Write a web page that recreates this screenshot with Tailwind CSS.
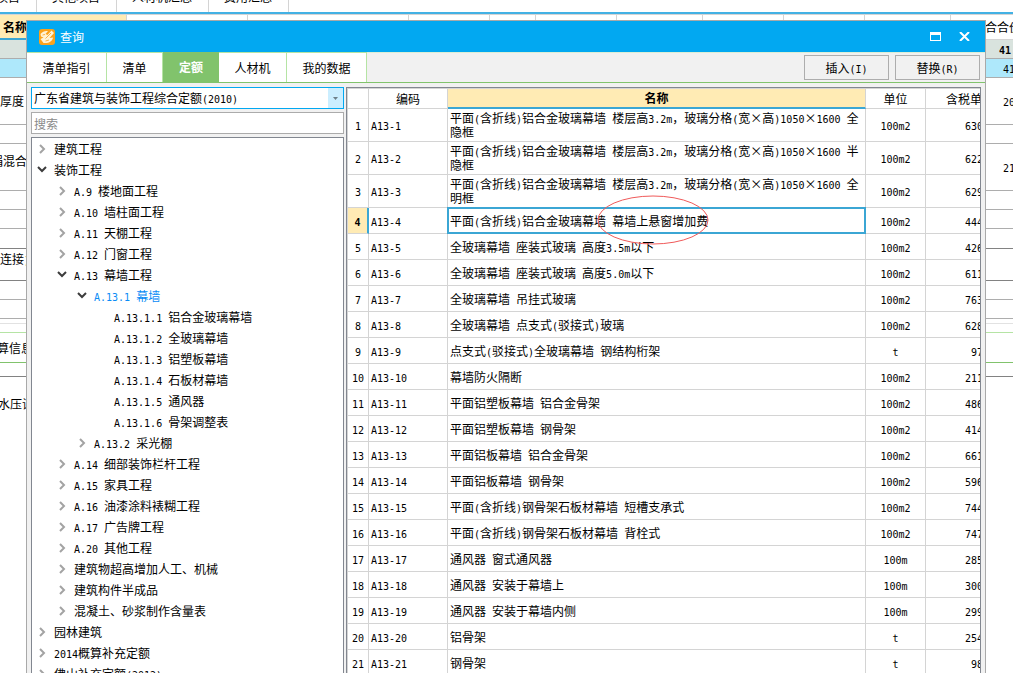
<!DOCTYPE html>
<html lang="zh-CN">
<head>
<meta charset="utf-8">
<title>查询</title>
<script src="https://cdn.jsdelivr.net/npm/@tailwindcss/browser@4"></script>
</head>
<body class="relative h-screen overflow-hidden bg-white font-['Noto_Sans_CJK_SC',sans-serif] text-[12px] leading-[14px] text-black">

<!-- main window behind the dialog -->
<div class="h-full overflow-hidden" data-latin>
  <nav class="-mt-[18px] flex h-[30px] items-center">
    <a href="#" class="flex h-full w-[37px] items-center justify-end border-r border-[#d4d4d4] pr-4 whitespace-nowrap">项目</a>
    <a href="#" class="flex h-full items-center border-r border-[#d4d4d4] pr-4 pl-[15px]">其他项目</a>
    <a href="#" class="flex h-full items-center border-r border-[#d4d4d4] pr-4 pl-[15px]">人材机汇总</a>
    <a href="#" class="flex h-full items-center border-r border-[#d4d4d4] pr-4 pl-[15px]">费用汇总</a>
  </nav>
  <div class="h-[3px] border-t-2 border-b border-t-[#43b1e4] border-b-[#d4d4d4]"></div>
  <div class="flex h-[25px]">
    <div class="flex w-[127px] items-center border-r border-b-2 border-r-[#d4d4d4] border-b-[#3ba6d4] bg-[#ffebb4] pl-[3px] font-bold">名称</div>
    <div class="w-[121px] border-r border-[#d4d4d4]"></div>
    <div class="flex-1 border-r border-[#d4d4d4]"></div>
    <div class="w-[81px] border-r border-[#d4d4d4]"></div>
    <div class="w-[46px] border-r border-[#d4d4d4]"></div>
    <div class="w-[81px] border-r border-[#d4d4d4]"></div>
    <div class="w-[86px] border-r border-[#d4d4d4]"></div>
    <div class="w-[81px] border-r border-[#d4d4d4]"></div>
    <div class="w-[81px] border-r border-[#d4d4d4]"></div>
    <div class="w-[86px] border-r border-[#d4d4d4]"></div>
    <div class="flex w-[62px] items-center justify-end border-b border-[#d4d4d4] whitespace-nowrap"><span class="-mr-2">综合合价</span></div>
  </div>
  <div id="sheet"></div>
</div>

<!-- query dialog -->
<section class="absolute top-5 right-[27px] bottom-0 left-[26px] flex flex-col overflow-hidden border border-b-0 border-[#a9a9a9] bg-[#f1f1f1]" data-latin>
  <header class="flex h-[31px] shrink-0 items-center bg-[#02a8f1] pl-3 text-white">
    <svg class="h-4 w-4" viewBox="0 0 16 16">
      <rect width="16" height="16" rx="3" fill="#fba21c"/>
      <path d="M1.500 5C3.500 2.500 6 1.500 9 2L6.500 5L8.500 6L12.500 1.500L15 4L10.500 9L14 8.500C13.500 12 10 14.500 4.500 14L1.500 10L4.500 8.500L2 7.500Z" fill="#fff3d6"/>
      <path d="M6.500 9.500L12 4M3.500 6L6 5.500M6.500 12L10 11" stroke="#fba21c" stroke-width=".8" fill="none"/>
    </svg>
    <h1 class="ml-[5px] flex-1">查询</h1>
    <button aria-label="最大化" class="mr-[18px] h-[9px] w-[11px] border border-t-[3px] border-white"></button>
    <button aria-label="关闭" class="mr-[15px]">
      <svg class="h-[9px] w-[11px]" viewBox="0 0 11 9"><path d="M1 0L10 9M10 0L1 9" stroke="#fff" stroke-width="2"/></svg>
    </button>
  </header>

  <div class="flex h-[31px] shrink-0 items-stretch border-b border-[#81c36c]">
    <nav class="flex border-t border-[#b5e4a4] bg-white">
      <button class="w-20 border-r border-[#b5e4a4]">清单指引</button>
      <button class="w-14 border-r border-[#b5e4a4]">清单</button>
      <button class="-mt-px w-14 bg-[#81c36c] font-bold text-white">定额</button>
      <button class="w-[68px] border-r border-[#b5e4a4]">人材机</button>
      <button class="w-20 border-r border-[#b5e4a4]">我的数据</button>
    </nav>
    <div class="flex flex-1 justify-end gap-1.5 border-t border-[#dcefd6] pt-0.5 pr-[5px] pb-0.5">
      <button class="w-[85px] border border-[#adadad]">插入(I)</button>
      <button class="w-[85px] border border-[#adadad]">替换(R)</button>
    </div>
  </div>

  <div class="flex min-h-0 flex-1 gap-0.5 pt-1 pr-1 pl-1">
    <div class="flex w-[313px] shrink-0 flex-col">
      <button aria-haspopup="listbox" class="flex h-[22px] shrink-0 items-stretch border border-[#02a8f1] bg-white text-left">
        <span class="flex-1 self-center pl-0.5">广东省建筑与装饰工程综合定额(2010)</span>
        <span class="flex w-[15px] items-center justify-center bg-[#cbeeff]"><svg class="h-[3px] w-[5px]" viewBox="0 0 5 3"><path d="M0 0H5L2.500 3Z" fill="#6d7f88"/></svg></span>
      </button>
      <input aria-label="搜索" placeholder="搜索" class="mt-[3px] h-[22px] w-full shrink-0 border border-[#ababab] bg-white px-0.5 placeholder:text-[#8a8a8a]">
      <ul id="tree" class="mt-[3px] min-h-0 flex-1 overflow-hidden border border-b-0 border-[#828790] bg-white"></ul>
    </div>

    <div class="relative min-w-0 flex-1 overflow-hidden border border-b-0 border-[#828790] bg-white">
      <table class="w-full table-fixed border-separate border-spacing-0 border-l border-[#d4d4d4]">
        <colgroup><col class="w-[21px]"><col class="w-[79px]"><col><col class="w-[60px]"><col class="w-[54px]"></colgroup>
        <thead>
          <tr class="h-[21px]">
            <th class="border-t border-r border-b border-[#d4d4d4] p-0"></th>
            <th class="border-t border-r border-b border-[#d4d4d4] p-0 font-normal">编码</th>
            <th class="border-t border-r border-b-2 border-[#d4d4d4] border-b-[#3ba6d4] bg-[#ffebb4] p-0">名称</th>
            <th class="border-t border-r border-b border-[#d4d4d4] p-0 font-normal">单位</th>
            <th class="overflow-hidden border-t border-b border-[#d4d4d4] p-0 pl-5 text-left font-normal whitespace-nowrap">含税单价</th>
          </tr>
        </thead>
        <tbody id="rows"></tbody>
      </table>
      <svg class="pointer-events-none absolute top-[107px] left-[250px] h-[50px] w-[112px]" viewBox="0 0 112 50"><ellipse cx="56" cy="25" rx="55" ry="24" fill="none" stroke="#f05a5a"/></svg>
    </div>
  </div>
</section>

<script>
// Latin runs are set in a half-width monospace face; the multiplication sign takes a full cell.
const fmt = s => s.replace(/[\x20-\x7e]+|×/g, m => m === '×'
  ? '<span class="inline-block w-3 text-center leading-none">×</span>'
  : `<span class="font-['DejaVu_Sans_Mono',monospace] text-[10px] leading-none whitespace-pre-wrap">${m}</span>`);

document.querySelectorAll('[data-latin]').forEach(root => {
  const walker = document.createTreeWalker(root, NodeFilter.SHOW_TEXT);
  const nodes = [];
  while (walker.nextNode()) if (/[!-~]/.test(walker.currentNode.data)) nodes.push(walker.currentNode);
  nodes.forEach(n => { const s = document.createElement('span'); s.innerHTML = fmt(n.data.trim()); n.replaceWith(s); });
});

// [height, left text, right text, row classes, left text classes, right text width]
const G = 'border-b border-[#adadad] ', D = 'border-b border-[#828282] ';
const sheet = [
  ['h-[19px]', '', '41', G + 'bg-[#d9e3de] font-bold', '', 'w-[14px]'],
  ['h-[19px]', '', '41', G + 'bg-[#aee8fb]'],
  ['h-[47px]', '厚度', '20', G],
  ['h-[19px]', '', '', G],
  ['h-[47px]', '捐混合', '21', G, '-ml-[9px] pb-3'],
  ['h-[19px]', '', '', G],
  ['h-[19px]', '', '', G],
  ['h-[20px]', '', '', D],
  ['h-[32px]', '连接)', '', D, 'pb-3'],
  ['h-[19px]', '', '', G],
  ['h-[19px]', '', '', G],
  ['h-[5px]', '', '', 'border-b border-[#e2e2e2] '],
  ['h-[9px]', '', '', 'border-b border-[#b5e4a4] '],
  ['h-[30px]', '算信息', '', 'border-b border-[#81c36c] ', '-ml-[3px]'],
  ['h-[14px]', '', '', D],
  ['h-[54px]', '水压试', '', '', '-ml-[2px]'],
];
document.getElementById('sheet').innerHTML = sheet.map(([h, l, r, c, m, w]) =>
  `<div class="flex items-center justify-between overflow-hidden ${h} ${c}"><span class="${m || ''}">${fmt(l)}</span><span class="whitespace-nowrap ${w || 'w-[10px]'}">${fmt(r)}</span></div>`).join('');

// [level, state, label]; state: '>' collapsed, 'v' expanded, '' leaf
const tree = [
  [0, '>', '建筑工程'], [0, 'v', '装饰工程'], [1, '>', 'A.9 楼地面工程'], [1, '>', 'A.10 墙柱面工程'],
  [1, '>', 'A.11 天棚工程'], [1, '>', 'A.12 门窗工程'], [1, 'v', 'A.13 幕墙工程'], [2, 'v', 'A.13.1 幕墙'],
  [3, '', 'A.13.1.1 铝合金玻璃幕墙'], [3, '', 'A.13.1.2 全玻璃幕墙'], [3, '', 'A.13.1.3 铝塑板幕墙'],
  [3, '', 'A.13.1.4 石板材幕墙'], [3, '', 'A.13.1.5 通风器'], [3, '', 'A.13.1.6 骨架调整表'],
  [2, '>', 'A.13.2 采光棚'], [1, '>', 'A.14 细部装饰栏杆工程'], [1, '>', 'A.15 家具工程'],
  [1, '>', 'A.16 油漆涂料裱糊工程'], [1, '>', 'A.17 广告牌工程'], [1, '>', 'A.20 其他工程'],
  [1, '>', '建筑物超高增加人工、机械'], [1, '>', '建筑构件半成品'], [1, '>', '混凝土、砂浆制作含量表'],
  [0, '>', '园林建筑'], [0, '>', '2014概算补充定额'], [0, '>', '佛山补充定额(2012)'],
];
const indent = ['pl-[5px]', 'pl-[25px]', 'pl-[45px]', 'pl-[65px]'];
const arrow = {
  '>': '<path d="M3 1L7 5L3 9" stroke="#a3a3a3" stroke-width="2" fill="none"/>',
  'v': '<path d="M1 2L5 6L9 2" stroke="#3c3c3c" stroke-width="2" fill="none"/>',
  '': '',
};
document.getElementById('tree').innerHTML = tree.map(([n, s, t]) =>
  `<li class="flex h-[21px] items-center gap-[7px] whitespace-nowrap ${indent[n]} ${t === 'A.13.1 幕墙' ? 'text-[#0a8cf5]' : ''}"><svg class="h-[10px] w-[10px] shrink-0" viewBox="0 0 10 10">${arrow[s]}</svg><span class="pt-px">${fmt(t)}</span></li>`).join('');

const head = '平面(含折线)铝合金玻璃幕墙 楼层高3.2m，玻璃分格(宽×高)1050×1600 ';
const rows = [
  [head + '全隐框', '100m2', '630'], [head + '半隐框', '100m2', '622'], [head + '全明框', '100m2', '629'],
  ['平面(含折线)铝合金玻璃幕墙 幕墙上悬窗增加费', '100m2', '444'],
  ['全玻璃幕墙 座装式玻璃 高度3.5m以下', '100m2', '426'], ['全玻璃幕墙 座装式玻璃 高度5.0m以下', '100m2', '611'],
  ['全玻璃幕墙 吊挂式玻璃', '100m2', '763'], ['全玻璃幕墙 点支式(驳接式)玻璃', '100m2', '628'],
  ['点支式(驳接式)全玻璃幕墙 钢结构桁架', 't', '97'], ['幕墙防火隔断', '100m2', '211'],
  ['平面铝塑板幕墙 铝合金骨架', '100m2', '486'], ['平面铝塑板幕墙 钢骨架', '100m2', '414'],
  ['平面铝板幕墙 铝合金骨架', '100m2', '661'], ['平面铝板幕墙 钢骨架', '100m2', '596'],
  ['平面(含折线)钢骨架石板材幕墙 短槽支承式', '100m2', '744'], ['平面(含折线)钢骨架石板材幕墙 背栓式', '100m2', '747'],
  ['通风器 窗式通风器', '100m', '285'], ['通风器 安装于幕墙上', '100m', '300'], ['通风器 安装于幕墙内侧', '100m', '299'],
  ['铝骨架', 't', '254'], ['钢骨架', 't', '98'],
];
document.getElementById('rows').innerHTML = rows.map(([name, unit, price], i) => {
  const sel = i === 3, h = i < 3 ? 'h-[33px]' : 'h-[26px]';
  return `<tr class="${h}">
    <td class="border-b border-[#d4d4d4] p-0 text-center ${sel ? 'border-r-2 border-r-[#3ba6d4] bg-[#ffebb4] font-bold' : 'border-r'}">${fmt(String(i + 1))}</td>
    <td class="border-r border-b border-[#d4d4d4] p-0 pl-0.5">${fmt('A13-' + (i + 1))}</td>
    <td class="relative border-r border-b border-[#d4d4d4] p-0 pl-0.5">${fmt(name)}${sel ? '<span class="absolute -inset-px border-2 border-[#3ba6d4]"></span>' : ''}</td>
    <td class="border-r border-b border-[#d4d4d4] p-0 text-center">${fmt(unit)}</td>
    <td class="overflow-hidden border-b border-[#d4d4d4] p-0 whitespace-nowrap ${price.length < 3 ? 'pl-[45px]' : 'pl-[39px]'}">${fmt(price)}</td>
  </tr>`;
}).join('');
</script>
</body>
</html>
